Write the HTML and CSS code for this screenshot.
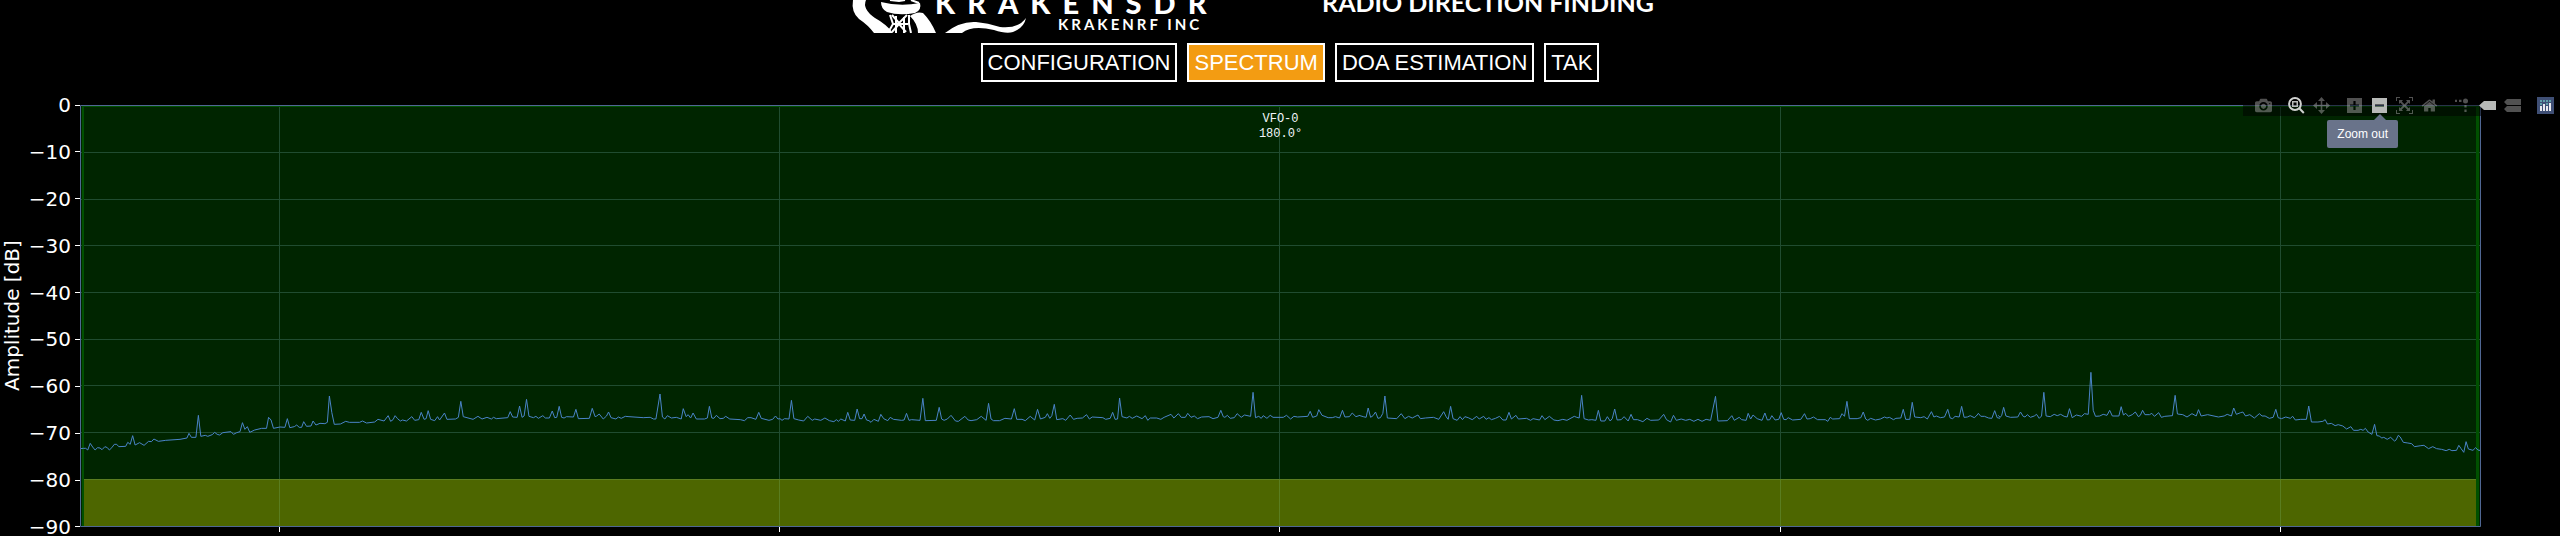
FILE: index.html
```
<!DOCTYPE html>
<html lang="en">
<head>
    <meta charset="UTF-8">
    <title>KrakenSDR</title>
    <link rel="stylesheet" href="styles.css">
</head>
<body>
    <header class="header">
        <svg class="logo" viewBox="0 0 365 33" role="img" aria-label="KrakenSDR">
            <path fill="#fff" d="M9 0 H22 Q18 9 31 18 Q42 24 49 33 H30 Q24 25 15 19 Q7 12 9 0Z"/>
            <path fill="#fff" d="M66 16 Q73 11 79 13 Q87 21 92 33 H74 Q74 24 66 16Z"/>
            <path fill="#fff" d="M37 2 Q56 7 76 3 Q78 10 71 13 Q55 16 43 12 Q37 9 37 2Z"/>
            <path fill="none" stroke="#fff" stroke-width="2" d="M46 0 L55 1 L61 0 M67 0 L75 3 M46 15 L49 24 L45 31 M65 15 V24 L67 33 M48 15 L55 23 L63 15 M48 24 H64 M48 32 L55 24 L62 32 M52 16 V33 M60 17 V33"/>
            <path fill="#fff" d="M101 33 Q116 21 132 22 Q144 23 156 27 Q174 29 182 18 Q180 28 169 32 Q162 34 150 30 Q128 25 118 33Z"/>
            <text class="logo-name" x="91" y="14">KRAKENSDR</text>
            <text class="logo-company" x="214" y="30">KRAKENRF INC</text>
        </svg>
        <h1 class="tagline">RADIO DIRECTION FINDING</h1>
    </header>

    <nav class="tabs">
        <button class="tab">CONFIGURATION</button>
        <button class="tab active">SPECTRUM</button>
        <button class="tab">DOA ESTIMATION</button>
        <button class="tab">TAK</button>
    </nav>

    <main class="graph">
        <div class="axis-title">Amplitude [dB]</div>
        <ul class="ticks">
            <li>0</li>
            <li>−10</li>
            <li>−20</li>
            <li>−30</li>
            <li>−40</li>
            <li>−50</li>
            <li>−60</li>
            <li>−70</li>
            <li>−80</li>
            <li>−90</li>
        </ul>
        <div class="plot">
            <svg class="spectrum" viewBox="0 0 2401 422" preserveAspectRatio="none">
                <rect class="channel" x="0" y="0" width="2401" height="422"/>
                <rect class="squelch" x="3" y="374" width="2395" height="48"/>
                <path class="grid" d="M0 47.5H2401 M0 94.5H2401 M0 140.5H2401 M0 187.5H2401 M0 234.5H2401 M0 280.5H2401 M0 327.5H2401 M199.5 0V422 M699.5 0V422 M1199.5 0V422 M1700.5 0V422 M2200.5 0V422"/>
                <path class="grid-squelch" d="M3 374.5H2398 M199.5 374V422 M699.5 374V422 M1199.5 374V422 M1700.5 374V422 M2200.5 374V422"/>
                <path class="channel-edge" d="M2 1H2399V422H2396V2H4V422H2Z"/>

                <!-- signal, left to right -->
                <svg x="0" y="265" width="640" height="100" viewBox="0 0 1568 300" preserveAspectRatio="none">
                    <polyline class="signal" points="0,236 8,235 14,235 19,240 25,220 31,231 37,240 43,233 49,234 54,239 61,230 67,233 72,240 78,233 84,223 90,223 95,230 112,229 117,217 123,223 129,197 135,225 146,218 157,226 168,214 175,215 181,207 192,214 210,211 245,208 262,204 267,190 273,202 284,202 290,136 296,199 307,196 313,199 324,194 330,187 336,193 342,195 350,188 370,185 376,193 384,188 392,185 398,158 404,178 410,170 416,187 428,180 445,175 457,175 462,142 468,150 474,175 490,171 502,172 508,146 514,173 525,170 531,165 537,172 543,172 548,155 555,169 566,168 571,153 578,165 588,160 600,161 606,157 611,78 617,128 623,163 638,162 651,154 660,157 685,157 692,153 702,159 722,156 730,148 745,153 755,137 761,154 767,149 772,137 778,146 785,153 790,150 800,153 813,140 820,151 830,149 836,127 843,148 848,146 853,122 859,148 869,152 876,140 881,150 893,129 899,148 920,147 927,142 933,94 939,140 963,148 975,139 985,147 997,142 1008,147 1013,142 1020,146 1048,143 1054,125 1060,141 1071,142 1077,108 1083,142 1088,138 1094,88 1100,139 1111,143 1117,139 1123,145 1134,137 1140,144 1150,144 1157,123 1163,143 1168,142 1174,109 1180,142 1186,144 1192,140 1209,141 1215,118 1221,146 1248,145 1255,115 1262,140 1266,138 1272,132 1282,147 1290,138 1295,126 1301,143 1313,147 1319,141 1326,145 1336,139 1345,140 1380,143 1397,142 1405,147 1411,147 1421,72 1427,141 1433,147 1439,137 1449,144 1461,142 1473,147 1478,116 1485,140 1490,134 1496,144 1502,129 1510,147 1530,147 1537,144 1542,109 1548,144 1553,145 1559,136 1568,146"/>
                </svg>
                <svg x="640" y="265" width="640" height="100" viewBox="0 0 1568 300" preserveAspectRatio="none">
                    <polyline class="signal" points="0,146 8,145 14,139 24,147 50,149 60,152 68,143 76,143 88,148 95,127 101,145 120,151 129,148 136,138 142,147 147,146 152,151 158,146 169,147 175,91 181,146 193,150 205,153 215,139 226,151 232,147 247,151 257,144 268,152 279,155 285,149 290,154 296,147 307,153 313,127 319,150 330,151 336,117 342,146 348,146 353,132 359,150 365,152 370,157 377,148 388,154 394,133 401,146 411,152 417,142 425,148 445,151 451,150 457,130 463,151 469,149 490,151 497,85 503,152 530,151 537,112 543,147 549,151 557,147 566,136 577,153 584,154 600,139 608,150 615,152 629,149 640,139 652,151 658,100 664,147 670,152 685,152 698,145 714,147 721,116 727,148 740,148 748,152 760,139 771,150 778,118 785,147 797,142 802,131 808,145 813,137 819,103 825,149 840,146 847,151 858,135 866,148 875,145 888,144 898,134 905,147 912,141 938,143 945,148 956,145 962,127 968,148 974,147 979,84 985,140 997,144 1003,139 1010,145 1021,138 1034,146 1042,137 1048,151 1054,144 1070,144 1080,148 1088,142 1105,133 1112,144 1123,131 1130,142 1140,142 1146,130 1154,142 1162,138 1170,146 1180,141 1198,140 1208,146 1220,142 1227,121 1233,140 1237,142 1243,136 1250,145 1260,143 1267,131 1277,142 1285,135 1300,139 1306,67 1312,143 1320,139 1326,145 1331,137 1340,145 1348,136 1355,142 1380,142 1388,136 1398,147 1406,139 1415,141 1440,139 1446,124 1452,142 1462,138 1467,119 1475,136 1490,143 1500,143 1508,140 1518,144 1525,121 1531,141 1542,140 1549,129 1558,140 1568,136"/>
                </svg>
                <svg x="1280" y="265" width="640" height="100" viewBox="0 0 1568 300" preserveAspectRatio="none">
                    <polyline class="signal" points="0,137 8,140 15,142 20,114 26,142 32,137 38,126 44,145 50,143 56,130 61,78 67,144 90,146 101,131 110,146 119,139 128,144 142,135 148,146 160,144 180,142 193,148 205,125 211,140 216,148 222,109 228,146 238,151 245,140 251,149 257,140 265,143 275,149 286,139 292,147 303,139 309,148 316,143 322,149 332,145 342,139 350,150 358,150 365,127 371,147 382,136 388,147 408,145 418,151 424,146 440,150 446,137 453,149 464,139 475,150 485,152 497,148 507,151 525,139 531,142 537,144 543,76 549,146 560,150 568,149 578,151 584,121 590,153 600,153 606,140 613,153 618,146 624,117 630,150 640,149 647,140 657,153 664,133 670,149 680,149 693,155 703,145 712,151 732,150 744,133 751,149 761,156 768,136 775,151 787,147 798,151 808,148 818,154 828,148 838,154 848,148 859,151 871,79 877,153 900,152 911,137 917,151 929,142 935,149 946,151 951,130 957,147 963,135 973,146 985,151 992,129 998,150 1004,149 1009,137 1017,150 1026,148 1032,128 1038,148 1044,149 1049,143 1060,150 1080,148 1089,131 1095,147 1103,146 1111,141 1121,149 1140,149 1146,154 1152,142 1158,147 1175,146 1181,131 1187,139 1193,94 1199,146 1218,146 1227,143 1233,126 1239,147 1244,151 1251,145 1263,150 1275,147 1285,141 1291,144 1297,142 1307,149 1313,145 1325,144 1331,118 1337,148 1347,148 1353,97 1359,141 1374,143 1382,140 1390,147 1400,125 1406,141 1412,138 1422,143 1432,141 1440,118 1446,144 1452,146 1458,139 1468,141 1474,109 1480,142 1488,141 1495,137 1505,143 1510,138 1515,130 1521,139 1530,139 1540,144 1548,145 1555,122 1561,143 1568,145"/>
                </svg>
                <svg x="1880" y="255" width="521" height="176" viewBox="0 0 1361 528" preserveAspectRatio="none">
                    <polyline class="signal" points="100,166 105,172 109,166 114,142 120,168 132,172 151,171 158,156 165,169 170,171 176,164 184,172 194,168 200,163 207,175 213,168 219,97 225,168 236,170 246,163 254,167 263,163 272,169 280,171 286,146 293,173 304,165 318,169 325,161 335,163 342,37 348,151 354,169 365,168 374,163 384,166 391,151 398,168 415,168 421,140 427,165 433,160 440,169 450,164 458,156 466,170 471,166 477,151 483,164 495,164 501,160 508,169 519,158 526,172 535,169 555,167 562,106 568,162 582,164 593,171 606,161 617,168 623,149 630,168 647,164 675,171 690,168 698,163 709,168 715,144 722,163 733,158 739,156 746,168 757,164 769,174 782,161 789,168 797,168 808,175 818,172 825,148 831,173 840,176 851,171 863,175 869,169 876,180 890,178 905,178 911,138 918,186 935,186 948,184 954,179 960,192 970,190 980,197 988,194 1000,198 1010,207 1021,200 1028,211 1040,211 1047,208 1053,211 1059,205 1066,216 1076,223 1083,193 1089,227 1095,228 1102,234 1107,232 1116,238 1125,232 1135,243 1139,240 1145,226 1150,231 1158,247 1170,249 1180,251 1187,260 1204,257 1212,256 1224,266 1235,260 1245,266 1258,268 1270,272 1278,268 1285,272 1297,271 1303,256 1309,266 1316,277 1322,245 1328,267 1340,271 1347,263 1353,270 1361,272"/>
                </svg>

                <path class="frame" d="M0.5 0.5H2400.5V421.5H0.5Z"/>
                <path class="x-ticks" d="M199.5 422V427 M699.5 422V427 M1199.5 422V427 M1700.5 422V427 M2200.5 422V427"/>
            </svg>
            <div class="vfo">VFO-0<br>180.0°</div>
        </div>

        <div class="modebar">
            <div class="modebar-group">
                <button class="mode" aria-label="Download plot as a png">
                    <svg viewBox="0 0 1000 1000"><path transform="matrix(1 0 0 -1 0 850)" d="m500 450c-83 0-150-67-150-150 0-83 67-150 150-150 83 0 150 67 150 150 0 83-67 150-150 150z m400 150h-120c-16 0-34 13-39 29l-31 93c-6 15-23 28-40 28h-340c-16 0-34-13-39-28l-31-94c-6-15-23-28-40-28h-120c-55 0-100-45-100-100v-450c0-55 45-100 100-100h800c55 0 100 45 100 100v450c0 55-45 100-100 100z m-400-550c-138 0-250 112-250 250 0 138 112 250 250 250 138 0 250-112 250-250 0-138-112-250-250-250z m365 380c-19 0-35 16-35 35 0 19 16 35 35 35 19 0 35-16 35-35 0-19-16-35-35-35z"/></svg>
                </button>
            </div>
            <div class="modebar-group">
                <button class="mode on" aria-label="Zoom">
                    <svg viewBox="0 0 17 17"><circle class="line" cx="7" cy="7" r="5.9"/><path class="line" d="M11.5 11.5L15.8 16"/><path fill-rule="evenodd" d="M4 4H10V10H4Z M5.5 5.5V8.5H8.5V5.5Z"/></svg>
                </button>
                <button class="mode" aria-label="Pan">
                    <svg viewBox="0 0 17 17"><path d="M8.5 0L12 4H9.3V7.7H13V5L17 8.5L13 12V9.3H9.3V13H12L8.5 17L5 13H7.7V9.3H4V12L0 8.5L4 5V7.7H7.7V4H5Z"/></svg>
                </button>
            </div>
            <div class="modebar-group">
                <button class="mode" aria-label="Zoom in">
                    <svg viewBox="0 0 17 17"><path fill-rule="evenodd" d="M1 1H16V16H1Z M7.4 4V7.4H4V9.6H7.4V13H9.6V9.6H13V7.4H9.6V4Z"/></svg>
                </button>
                <button class="mode on" aria-label="Zoom out" aria-describedby="tip">
                    <svg viewBox="0 0 17 17"><path fill-rule="evenodd" d="M1 1H16V16H1Z M4 7.4V9.6H13V7.4Z"/></svg>
                    <span class="tooltip" id="tip" role="tooltip">Zoom out</span>
                </button>
                <button class="mode" aria-label="Autoscale">
                    <svg viewBox="0 0 17 17"><path d="M0 0H4V1H1V4H0Z M13 0H17V4H16V1H13Z M0 13H1V16H4V17H0Z M16 13H17V17H13V16H16Z M3 3H7L5.8 4.4L8.5 7.2L11.2 4.4L10 3H14V7L12.6 5.8L9.9 8.5L12.6 11.2L14 10V14H10L11.2 12.6L8.5 9.9L5.8 12.6L7 14H3V10L4.4 11.2L7.1 8.5L4.4 5.8L3 7Z"/></svg>
                </button>
                <button class="mode" aria-label="Reset axes">
                    <svg viewBox="0 0 929 1000"><path transform="matrix(1 0 0 -1 0 850)" d="m786 296v-267q0-15-11-26t-25-10h-214v214h-143v-214h-214q-15 0-25 10t-11 26v267q0 1 0 2t0 2l321 264 321-264q1-1 1-4z m124 39l-34-41q-5-5-12-6h-2q-7 0-12 3l-386 322-386-322q-7-4-13-4-7 2-12 7l-35 41q-4 5-3 13t6 12l401 334q18 15 42 15t43-15l136-114v109q0 8 5 13t13 5h107q8 0 13-5t5-13v-227l122-102q5-5 6-12t-4-13z"/></svg>
                </button>
            </div>
            <div class="modebar-group">
                <button class="mode" aria-label="Toggle spike lines">
                    <svg viewBox="0 0 17 17"><circle cx="11.5" cy="4" r="2.5"/><path d="M1 2.8H3V5H1Z M5 2.8H7.5V5H5Z M10.4 8H12.6V10.4H10.4Z M10.4 12.5H12.6V15H10.4Z"/></svg>
                </button>
                <button class="mode on" aria-label="Show closest data on hover">
                    <svg viewBox="0 0 17 17"><path d="M0 8.5L5 4H17V13H5Z"/></svg>
                </button>
                <button class="mode" aria-label="Compare data on hover">
                    <svg viewBox="0 0 17 17"><path d="M0 5L3 2H17V8H3Z M0 12L3 9H17V15H3Z"/></svg>
                </button>
            </div>
            <div class="modebar-group">
                <a class="mode" href="#" aria-label="Produced with Plotly">
                    <svg viewBox="0 0 17 17"><rect fill="#3f4f75" width="17" height="17"/><path fill="#5f9ea8" d="M3 3h2v2h-2z M6 3h2v2h-2z M9 3h2v2h-2z M12 3h2v2h-2z M3 6h2v2h-2z M9 6h2v2h-2z"/><path fill="#e8e8ee" d="M3 9h2v5h-2z M6 7h2v7h-2z M9 9h2v5h-2z M12 6h2v8h-2z"/></svg>
                </a>
            </div>
        </div>
    </main>
</body>
</html>
```
FILE: styles.css
```
body {
    margin: 0;
    background: #000;
    color: #fff;
    font-family: "Liberation Sans", Arial, sans-serif;
    overflow: hidden;
}
.header {
    display: flex;
    justify-content: center;
    align-items: flex-start;
    gap: 113px;
    height: 33px;
    padding-right: 62px;
    overflow: hidden;
}
.logo {
    width: 365px;
    height: 33px;
    fill: #fff;
}
.logo-name {
    font: 900 29px Lato, sans-serif;
    letter-spacing: 12px;
}
.logo-company {
    font: bold 15px Lato, sans-serif;
    letter-spacing: 3px;
}
.tagline {
    margin: -12px 0 0;
    font: bold 25px/28px Lato, sans-serif;
}
.tabs {
    display: flex;
    justify-content: center;
    gap: 10px;
    padding: 10px 0 13px 20px;
}
.tab {
    padding: 5px;
    border: 2px solid #fff;
    background: #000;
    color: #fff;
    font: 22px/25px "Liberation Sans", Arial, sans-serif;
    cursor: pointer;
}
.tab.active {
    background: #f39c12;
}

/* spectrum graph */
.graph {
    position: relative;
    display: flex;
    padding: 0 79px 0 0;
    font: 20px/20px "DejaVu Sans", Verdana, sans-serif;
}
.axis-title {
    width: 24px;
    writing-mode: vertical-rl;
    transform: rotate(180deg);
    text-align: center;
    line-height: 24px;
}
.ticks {
    display: flex;
    flex-direction: column;
    justify-content: space-between;
    width: 56px;
    margin: 0;
    padding: 0;
    list-style: none;
    text-align: right;
}
.ticks li {
    display: flex;
    justify-content: flex-end;
    align-items: center;
    gap: 4px;
}
.ticks li::after {
    content: "";
    width: 5px;
    height: 1px;
    background: #fff;
}
.plot {
    position: relative;
    flex: 1;
    padding: 10px 0;
}
.spectrum {
    display: block;
    width: 100%;
    height: 422px;
    overflow: visible;
}
.spectrum path, .signal {
    vector-effect: non-scaling-stroke;
}
.channel {
    fill: #002500;
}
.squelch {
    fill: #4d6600;
}
.channel-edge {
    fill: #005000;
}
.grid, .grid-squelch, .frame, .x-ticks {
    fill: none;
    stroke-width: 1px;
}
.grid {
    stroke: #204c30;
}
.grid-squelch {
    stroke: #5a7d20;
}
.frame {
    stroke: #506794;
}
.x-ticks {
    stroke: #fff;
}
.signal {
    fill: none;
    stroke: #4a84c8;
    stroke-width: 1px;
}
.vfo {
    position: absolute;
    top: 17px;
    left: 0;
    right: 0;
    text-align: center;
    color: #f2f5fa;
    font: 12px/15px "Liberation Mono", "Courier New", monospace;
}

/* toolbar over the top right corner */
.modebar {
    position: absolute;
    top: 0;
    right: 2px;
    display: flex;
    background: rgba(0, 0, 0, 0.5);
}
.modebar-group {
    display: flex;
    padding-left: 8px;
}
.mode {
    position: relative;
    display: block;
    width: 25px;
    height: 21px;
    padding: 2px 4px;
    border: 0;
    background: none;
    fill: rgba(180, 180, 180, 0.45);
    box-sizing: border-box;
    cursor: pointer;
}
.mode.on {
    fill: #b8bab8;
}
.mode svg {
    display: block;
    width: 17px;
    height: 17px;
}
.mode .line {
    fill: none;
    stroke: #d0d2d0;
    stroke-width: 2;
}
.tooltip {
    position: absolute;
    top: 25px;
    right: -6px;
    padding: 4px 10px;
    border-radius: 2px;
    background: #69738a;
    color: #fff;
    font: 12px/20px "Liberation Sans", Arial, sans-serif;
    white-space: nowrap;
}
.tooltip::before {
    content: "";
    position: absolute;
    top: -6px;
    right: 12px;
    border: 6px solid transparent;
    border-top: 0;
    border-bottom-color: #69738a;
}
```
